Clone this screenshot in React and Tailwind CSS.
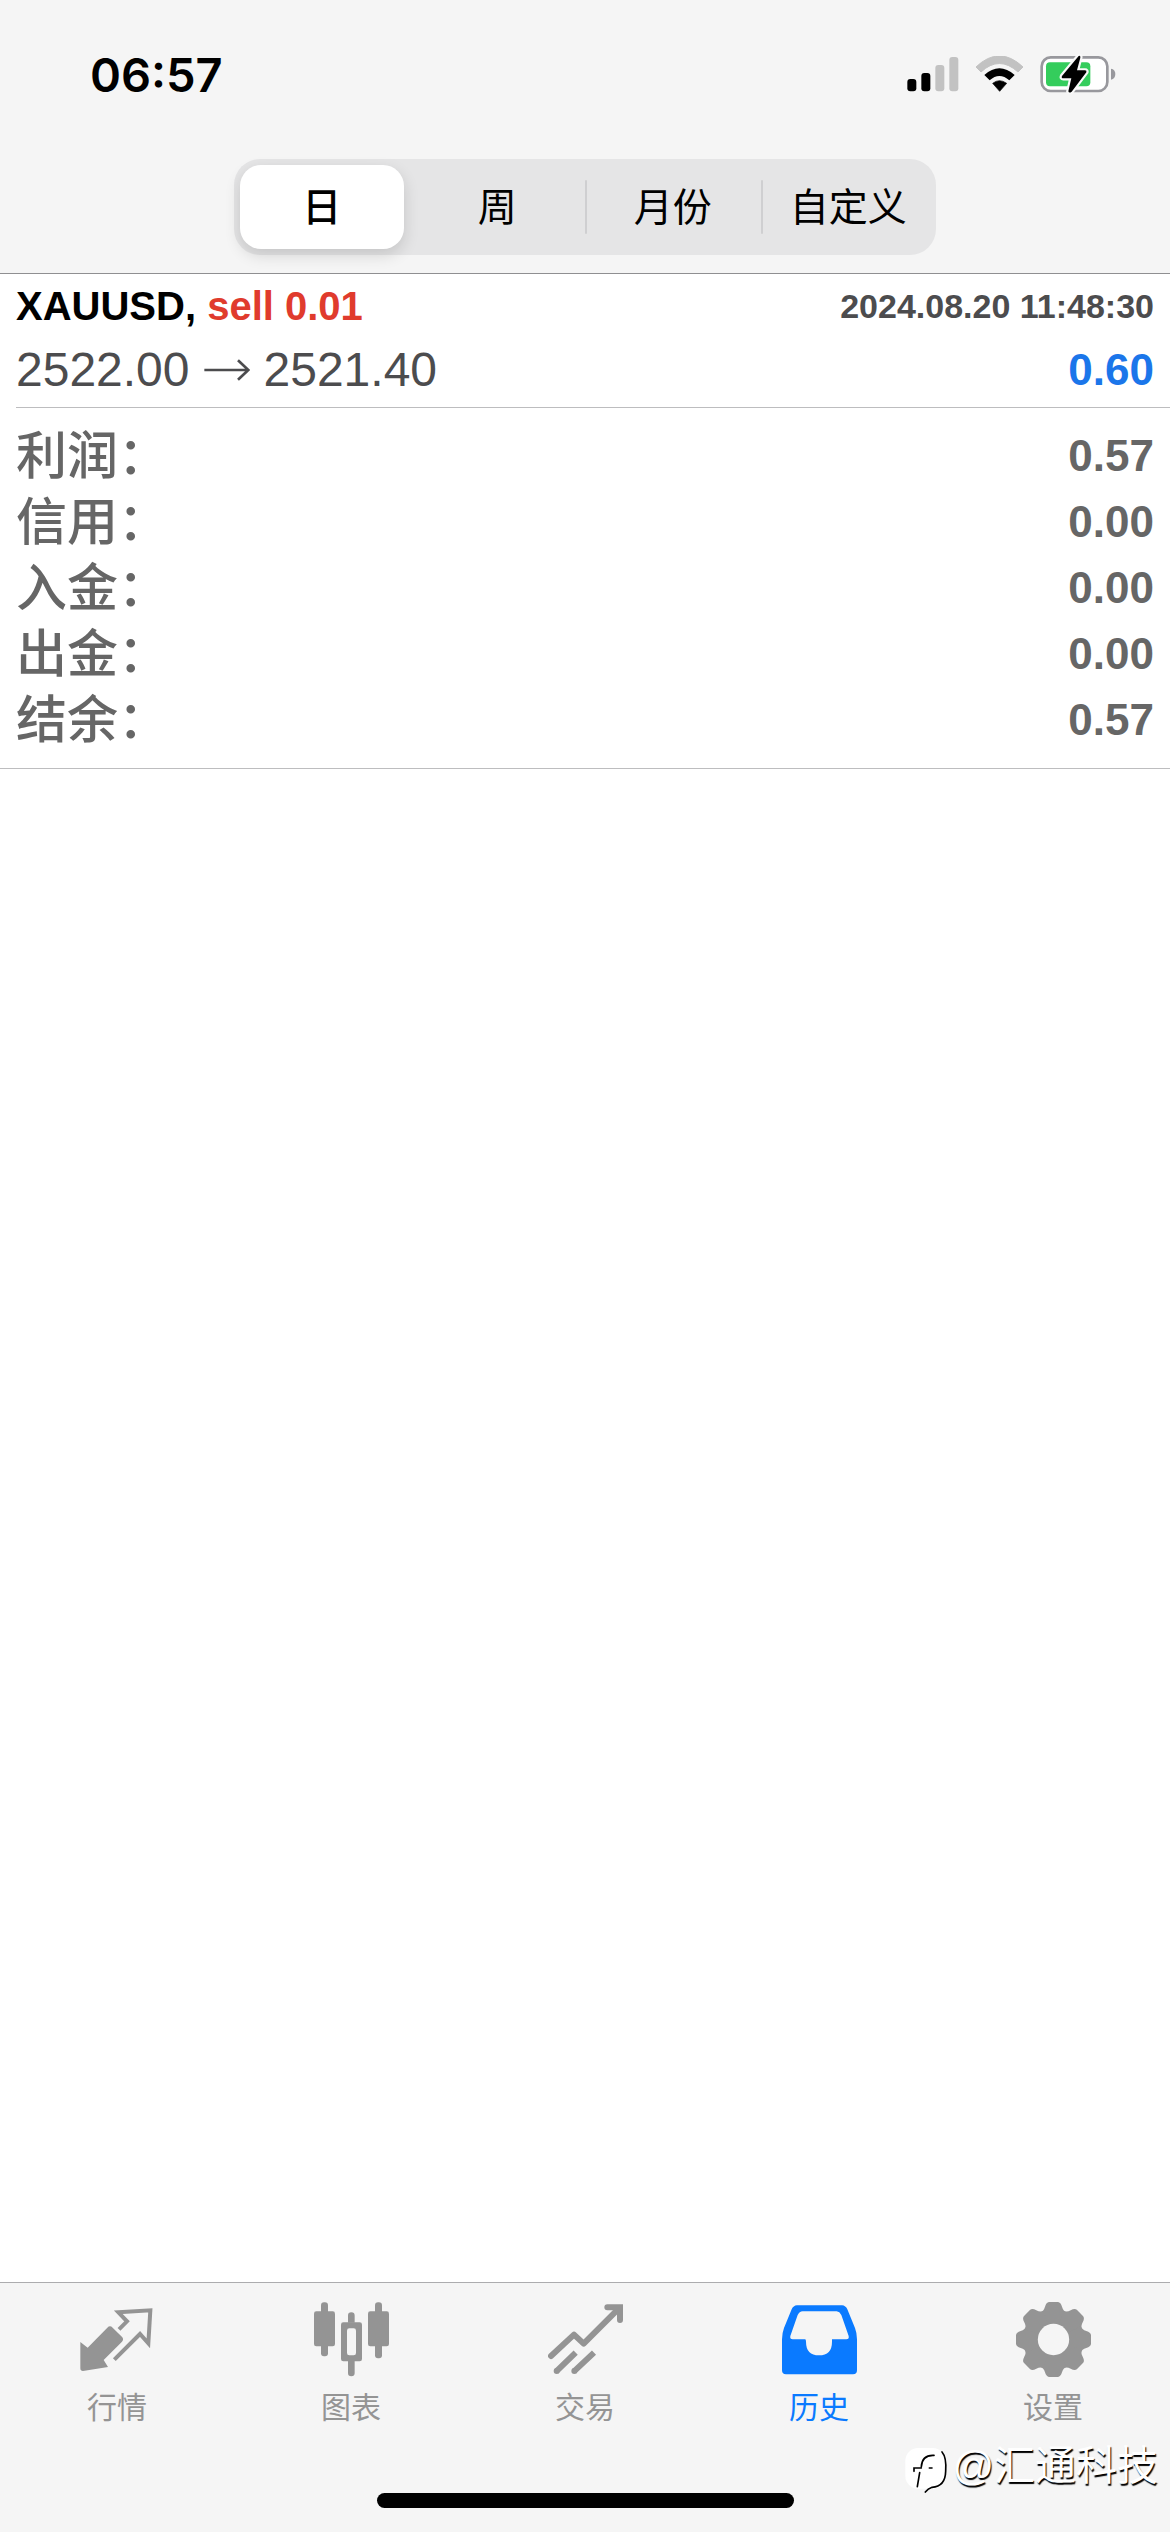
import { useState } from 'react'
import clsx from 'clsx'

const periods = ['日', '周', '月份', '自定义']

const summary = [
  { label: '利润', value: '0.57' },
  { label: '信用', value: '0.00' },
  { label: '入金', value: '0.00' },
  { label: '出金', value: '0.00' },
  { label: '结余', value: '0.57' },
]

const tabs = [
  { name: '行情', icon: QuotesIcon },
  { name: '图表', icon: ChartIcon },
  { name: '交易', icon: TradeIcon },
  { name: '历史', icon: HistoryIcon },
  { name: '设置', icon: SettingsIcon },
]

function QuotesIcon(props) {
  return (
    <svg viewBox="0 0 225 225" fill="none" {...props}>
      <path
        fill="currentColor"
        d="M1 120 L23 137 L82 77 Q90 69 98 77 L127 106 Q132 113 126 119 L71 174 L84 195 L9 207 Q1 207 1 199 Z"
      />
      <path
        stroke="currentColor"
        strokeWidth="12"
        d="M117 82 L141 58 L115 31 L211 25 L205 124 L180 96 L103 173"
      />
    </svg>
  )
}

function ChartIcon(props) {
  return (
    <svg viewBox="0 0 225 225" fill="currentColor" {...props}>
      <rect x="0" y="28" width="63" height="105" rx="7" />
      <rect x="21" y="1" width="21" height="162" rx="9" />
      <path
        fillRule="evenodd"
        d="M88 61 H137 Q144 61 144 68 V171 Q144 178 137 178 H88 Q81 178 81 171 V68 Q81 61 88 61 Z M106 79 Q99 79 99 86 V153 Q99 160 106 160 H119 Q126 160 126 153 V86 Q126 79 119 79 Z"
      />
      <path d="M102 62 V41 Q102 31 112 31 Q122 31 122 41 V62 Z" />
      <path d="M102 177 V213 Q102 223 112 223 Q122 223 122 213 V177 Z" />
      <rect x="162" y="28" width="63" height="105" rx="7" />
      <rect x="183" y="1" width="21" height="168" rx="9" />
    </svg>
  )
}

function TradeIcon(props) {
  return (
    <svg viewBox="0 0 225 225" fill="none" stroke="currentColor" strokeWidth="18" {...props}>
      <path strokeLinecap="round" strokeLinejoin="round" d="M9 162 L78 98 L107 125 L212 20" />
      <path strokeLinecap="round" d="M178 16 H216 V54" />
      <path d="M25 208 L83 152 M78 208 L138 152" />
      <circle cx="26" cy="207" r="9" fill="currentColor" stroke="none" />
      <circle cx="79" cy="207" r="9" fill="currentColor" stroke="none" />
    </svg>
  )
}

function HistoryIcon(props) {
  return (
    <svg viewBox="0 0 225 225" fill="currentColor" {...props}>
      <path
        fillRule="evenodd"
        d="M45 10 H180 Q191 11 196 22 L219 78 Q225 94 225 112 V205 Q225 217 213 217 H12 Q0 217 0 205 V112 Q0 94 6 78 L29 22 Q34 11 45 10 Z M62 28 Q52 29 47 39 L25 102 Q23 112 32 112 H69 Q72 112 72 119 Q72 160 111 160 Q150 160 150 119 V112 H193 Q202 112 200 102 L178 39 Q173 29 164 28 Z"
      />
    </svg>
  )
}

function SettingsIcon(props) {
  const tooth =
    'M99 0 H126 Q134 1 138 14 Q142 28 152 30 L112 112 L73 30 Q83 28 87 14 Q91 1 99 0 Z'
  return (
    <svg viewBox="0 0 225 225" fill="currentColor" {...props}>
      {[0, 45, 90, 135, 180, 225, 270, 315].map(angle => (
        <path key={angle} d={tooth} transform={`rotate(${angle} 112.5 112.5)`} />
      ))}
      <circle cx="112.5" cy="112.5" r="47" fill="#f5f5f5" />
    </svg>
  )
}

function StatusBar() {
  return (
    <div className="flex h-[148px] items-center justify-between pr-[54px] pl-[90px]">
      <time className="font-['Inter'] text-[47px] font-semibold">06:57</time>
      <div className="flex items-center gap-4">
        <svg className="h-9 w-[52px]" viewBox="0 0 156 108">
          <rect x="1" y="69" width="27" height="37" rx="9" />
          <rect x="43" y="51" width="27" height="55" rx="9" />
          <rect x="85" y="27" width="27" height="79" rx="9" fill="#c2c2c2" />
          <rect x="127" y="3" width="27" height="103" rx="9" fill="#c2c2c2" />
        </svg>
        <svg className="h-9 w-[49px]" viewBox="0 0 147 108">
          <path
            d="M3 33 Q73 -34 144 33 L129 48 Q73 -3 18 48 Z"
            fill="#c2c2c2"
            stroke="#c2c2c2"
            strokeWidth="3"
            strokeLinejoin="round"
          />
          <path d="M28 57 Q73 17 119 57 L103 73 Q73 47 44 73 Z" />
          <path d="M53 82 Q73 66 95 82 L74 106 Z" stroke="#000" strokeWidth="2" strokeLinejoin="round" />
        </svg>
        <svg className="h-10 w-[76px]" viewBox="0 0 228 120">
          <rect x="5" y="10" width="197" height="101" rx="27" fill="#fff" stroke="#98989d" strokeWidth="8" />
          <path d="M213 44 Q226 46 226 60 Q226 74 213 77 Z" fill="#98989d" />
          <rect x="18" y="25" width="133" height="72" rx="12" fill="#34cd5c" />
          <path
            d="M116 6 L66 66 Q63 73 70 73 H94 L85 112 Q87 119 95 113 L139 55 Q141 49 135 49 H111 L121 11 Q122 4 116 6 Z"
            stroke="#f9f9f9"
            strokeWidth="13"
            paintOrder="stroke"
          />
        </svg>
      </div>
    </div>
  )
}

function PeriodSwitch({ value, onChange }) {
  return (
    <div className="mx-auto mt-[11px] grid h-24 w-3/5 grid-cols-4 rounded-[26px] bg-[#e5e5e6]">
      {periods.map((period, i) => (
        <div key={period} className="relative p-[6px]">
          <button
            type="button"
            aria-pressed={period === value}
            onClick={() => onChange(period)}
            className={clsx(
              'h-full w-full rounded-[21px] text-[39px] whitespace-nowrap text-black',
              period === value ? 'bg-white font-medium shadow-[0_6px_16px_rgba(0,0,0,0.14)]' : 'font-normal',
            )}
          >
            {period}
          </button>
          {i > 1 && <span className="absolute top-[21px] left-0 h-[54px] w-[2px] rounded-full bg-[#cfcfd1]" />}
        </div>
      ))}
    </div>
  )
}

function Deal() {
  return (
    <article className="ml-4 border-b border-[#bdbdbf] pr-4 pb-[5px] text-[#4c4c4e]">
      <div className="flex h-16 items-center justify-between font-bold">
        <h2 className="text-[40px] text-black">
          XAUUSD, <span className="text-[#e03b2d]">sell 0.01</span>
        </h2>
        <time className="text-[34px]">2024.08.20 11:48:30</time>
      </div>
      <div className="flex h-16 items-center justify-between">
        <p className="flex items-center gap-[14px] text-5xl">
          2522.00
          <svg className="h-6 w-[46px]" viewBox="0 0 138 72" fill="none" stroke="currentColor" strokeWidth="8">
            <path d="M1 36 H132 M102 7 L133 36 L102 65" />
          </svg>
          2521.40
        </p>
        <span className="text-[44px] font-bold text-[#1b76ea]">0.60</span>
      </div>
    </article>
  )
}

function Summary() {
  return (
    <dl className="border-b border-[#bdbdbf] px-4 py-[15px] text-[#666]">
      {summary.map(row => (
        <div key={row.label} className="flex h-[66px] items-center justify-between">
          <dt className="text-[51px] font-medium">{row.label}：</dt>
          <dd className="text-[44px] font-bold">{row.value}</dd>
        </div>
      ))}
    </dl>
  )
}

function Watermark() {
  return (
    <div className="pointer-events-none absolute right-3 bottom-[38px] flex items-start gap-1 text-[41px] text-white [text-shadow:1px_2px_1px_#000]">
      <svg className="h-12 w-[44px]" viewBox="0 0 132 144" fill="none" stroke="#000" strokeLinecap="round">
        <rect x="4" y="6" width="120" height="122" rx="38" fill="#fff" stroke="none" />
        <path d="M114 18 Q128 34 125 76 Q124 122 84 124 Q72 128 64 138" strokeWidth="5" />
        <path d="M90 28 Q54 26 52 62 M52 66 H30 V76 M47 80 L40 122 M76 66 H84" strokeWidth="5" />
      </svg>
      <span>@汇通科技</span>
    </div>
  )
}

export default function App() {
  const [period, setPeriod] = useState('日')
  const [active, setActive] = useState('历史')

  return (
    <div className="relative flex min-h-screen flex-col bg-white font-['Liberation_Sans','Noto_Sans_CJK_SC',sans-serif] leading-none">
      <header className="border-b border-[#8f8f91] bg-[#f5f5f5] pb-[18px]">
        <StatusBar />
        <PeriodSwitch value={period} onChange={setPeriod} />
      </header>

      <main className="flex-1">
        <Deal />
        <Summary />
      </main>

      <nav className="border-t border-[#acacae] bg-[#f5f5f5] pb-6">
        <ul className="grid h-[210px] grid-cols-5 pt-[19px]">
          {tabs.map(tab => (
            <li key={tab.name}>
              <button
                type="button"
                onClick={() => setActive(tab.name)}
                className={clsx(
                  'flex w-full flex-col items-center gap-4 text-[30px]',
                  tab.name === active ? 'text-[#0a7aff]' : 'text-[#949494]',
                )}
              >
                <tab.icon aria-hidden="true" className="size-[75px]" />
                {tab.name}
              </button>
            </li>
          ))}
        </ul>
        {/* home indicator */}
        <div className="mx-auto h-[15px] w-[417px] rounded-full bg-black" />
      </nav>

      <Watermark />
    </div>
  )
}
